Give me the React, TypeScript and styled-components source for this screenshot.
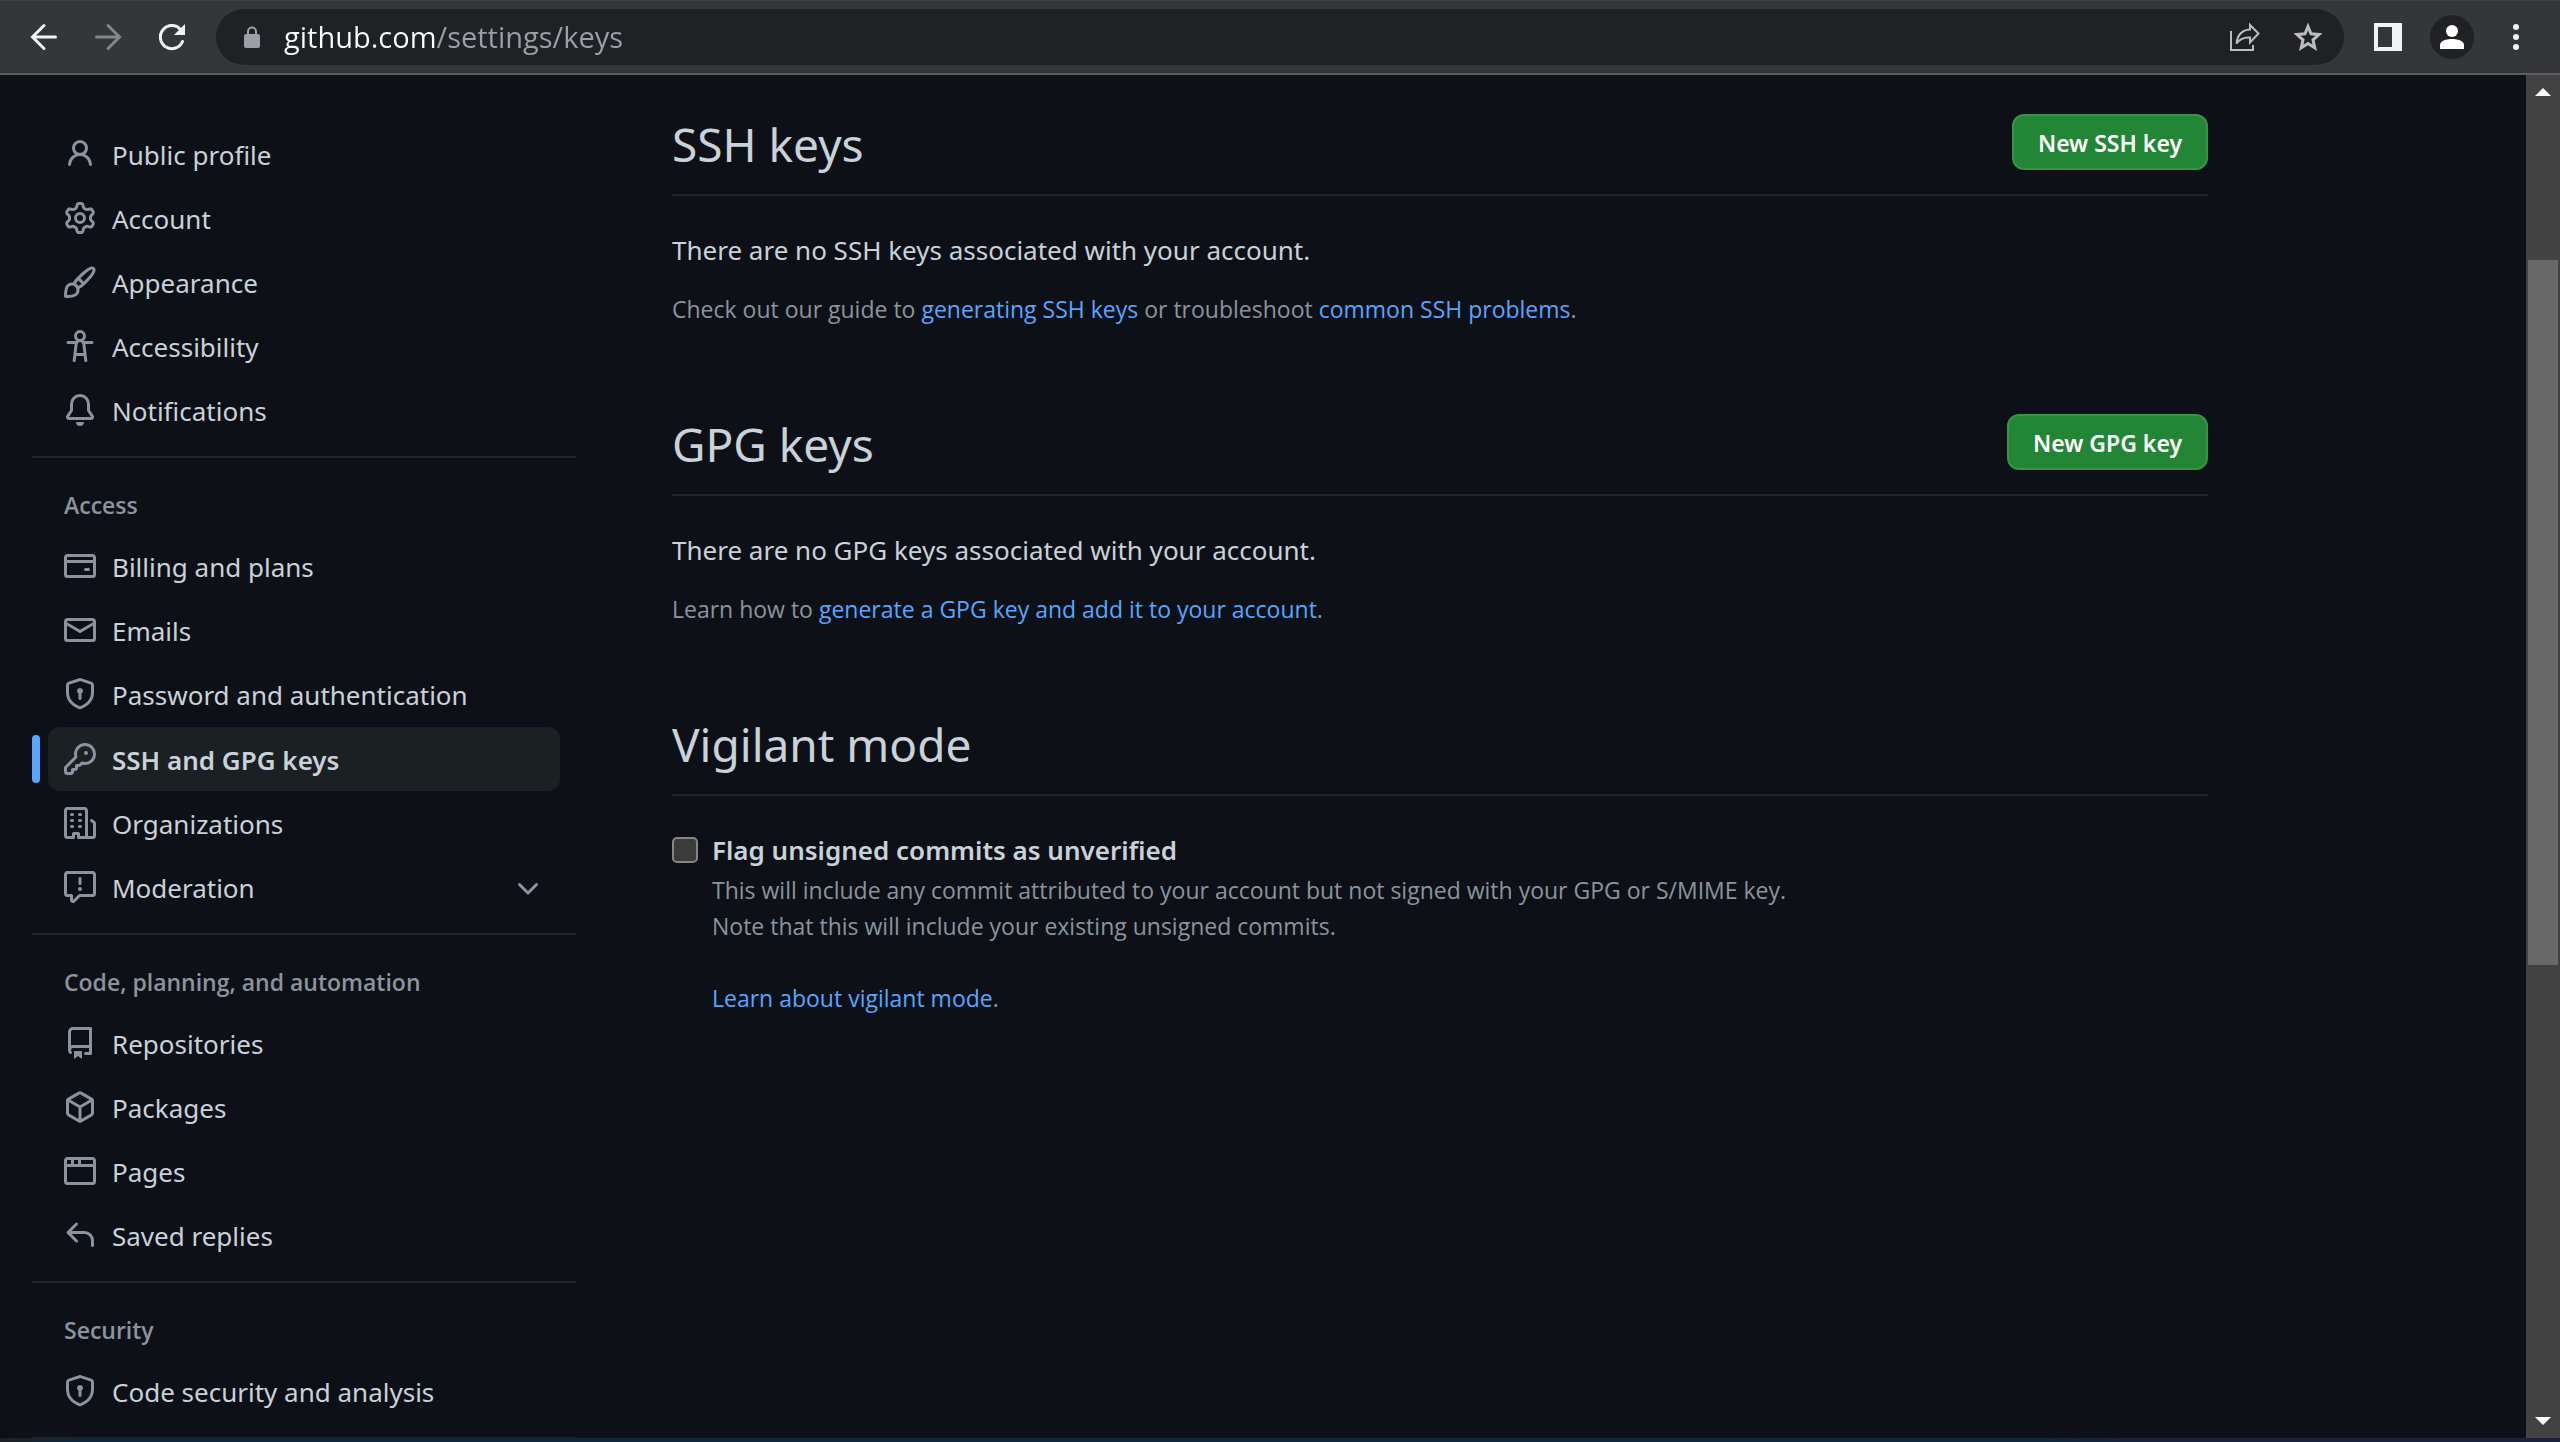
import React from "react";
import styled, { createGlobalStyle, css } from "styled-components";

const color = {
  canvas: "#0d1117",
  text: "#c9d1d9",
  muted: "#8b949e",
  accent: "#58a6ff",
  line: "#21262d",
  selected: "#1b2023",
  primary: "#238636",
  toolbar: "#35363a",
  omnibox: "#202124",
};

const font = {
  body: `"Noto Sans", "Open Sans", sans-serif`,
  caption: `"Open Sans", "Noto Sans", sans-serif`,
};

const GlobalStyle = createGlobalStyle`
  *, *::before, *::after { box-sizing: border-box; }
  html, body, #root { height: 100%; }
  body {
    margin: 0;
    overflow: hidden;
    background: ${color.canvas};
    color: ${color.text};
    font-family: ${font.body};
    font-size: 26px;
  }
  button, input { font-family: inherit; }
  svg { display: block; flex: none; }
`;

const Window = styled.div`
  display: flex;
  flex-direction: column;
  height: 100vh;
`;

/* ---------- browser toolbar ---------- */

const Toolbar = styled.header`
  display: flex;
  align-items: center;
  gap: 24px;
  padding: 8px 24px;
  background: ${color.toolbar};
  border-top: 1px solid #3f4044;
  border-bottom: 2px solid #5d5e62;
`;

const IconButton = styled.button`
  display: grid;
  place-items: center;
  width: 40px;
  height: 40px;
  padding: 0;
  border: 0;
  background: none;
  color: #f1f3f4;

  &:disabled {
    color: #85868a;
  }
`;

const Omnibox = styled.form`
  flex: 1;
  display: flex;
  align-items: center;
  gap: 20px;
  height: 56px;
  padding: 0 16px 0 24px;
  border-radius: 28px;
  background: ${color.omnibox};
`;

const hostWidth = 152;

const UrlInput = styled.input`
  flex: 1;
  min-width: 0;
  height: 40px;
  padding: 0 0 2px;
  border: 0;
  outline: 0;
  font-family: ${font.caption};
  font-size: 29px;
  color: transparent;
  background: linear-gradient(90deg, #ffffff ${hostWidth}px, #9aa0a6 ${hostWidth}px);
  -webkit-background-clip: text;
  background-clip: text;
`;

const OmniboxActions = styled.div`
  display: flex;
  gap: 24px;
`;

const BrowserActions = styled.div`
  display: flex;
  align-items: center;
  gap: 22px;
`;

const Avatar = styled(IconButton)`
  width: 44px;
  height: 44px;
  border-radius: 50%;
  background: ${color.omnibox};
`;

/* ---------- page ---------- */

const Viewport = styled.div`
  flex: 1;
  min-height: 0;
  display: flex;
`;

const Page = styled.div`
  flex: 1;
  min-width: 0;
  overflow: hidden;
  display: grid;
  grid-template-columns: 544px minmax(0, 1536px);
  column-gap: 96px;
  align-items: start;
  padding: 0 32px;
`;

const Sidebar = styled.nav`
  padding-top: 47px;
`;

const NavGroup = styled.section`
  & + & {
    margin-top: 14px;
    border-top: 2px solid ${color.line};
  }
`;

const NavHeading = styled.h2`
  margin: 0;
  padding: 29px 32px 11px;
  font-family: ${font.caption};
  font-size: 23px;
  line-height: 36px;
  font-weight: 600;
  color: ${color.muted};
`;

const NavList = styled.ul`
  margin: 0;
  padding: 0;
  list-style: none;
`;

const NavItem = styled.li<{ $active?: boolean }>`
  display: flex;
  align-items: center;
  gap: 8px;
  margin-top: ${(p) => (p.$active ? "1px" : "0")};
  padding-right: 16px;

  &::before {
    content: "";
    width: 8px;
    height: 48px;
    border-radius: 12px;
    background: ${(p) => (p.$active ? color.accent : "transparent")};
  }
`;

const navRow = css<{ $active?: boolean }>`
  flex: 1;
  display: flex;
  align-items: center;
  gap: 16px;
  height: 64px;
  padding: 0 16px;
  border: 0;
  border-radius: 12px;
  background: ${(p) => (p.$active ? color.selected : "transparent")};
  color: ${color.text};
  font-size: 26px;
  font-weight: ${(p) => (p.$active ? 600 : 400)};
  text-align: left;
  text-decoration: none;
`;

const NavLink = styled.a<{ $active?: boolean }>`
  ${navRow}
`;

const NavToggle = styled.button<{ $active?: boolean }>`
  ${navRow}
`;

const NavText = styled.span`
  flex: 1;
  padding-top: 2px;
`;

const NavIcon = styled.svg`
  width: 32px;
  height: 32px;
  fill: ${color.muted};
`;

const Main = styled.main`
  display: grid;
  gap: 80px;
  padding-top: 33px;
`;

const SectionHeader = styled.div`
  display: flex;
  align-items: center;
  justify-content: space-between;
  margin-bottom: 32px;
  padding-bottom: 14px;
  border-bottom: 2px solid ${color.line};
`;

const Title = styled.h1`
  margin: 0;
  font-size: 46px;
  line-height: 72px;
  font-weight: 400;
`;

const PrimaryButton = styled.button`
  height: 56px;
  margin-bottom: 4px;
  padding: 2px 24px 0;
  border: 2px solid #369447;
  border-radius: 12px;
  background: ${color.primary};
  color: #ffffff;
  font-size: 23px;
  font-weight: 600;
`;

const SectionBody = styled.div`
  min-height: 100px;
`;

const Lead = styled.p`
  margin: 0 0 19px;
  line-height: 44px;
`;

const Hint = styled.p`
  margin: 0;
  font-family: ${font.caption};
  font-size: 23px;
  line-height: 36px;
  color: ${color.muted};
`;

const Link = styled.a`
  color: ${color.accent};
  text-decoration: none;
`;

const Option = styled.div`
  display: grid;
  grid-template-columns: 26px 1fr;
  column-gap: 14px;
  align-items: center;
`;

const Checkbox = styled.input`
  appearance: none;
  width: 26px;
  height: 26px;
  margin: 0;
  border: 2px solid #858585;
  border-radius: 5px;
  background: #3b3b3b;
`;

const OptionLabel = styled.label`
  line-height: 44px;
  font-weight: 600;
`;

const OptionNote = styled(Hint)`
  grid-column: 2;

  & + & {
    margin-top: 36px;
  }
`;

/* ---------- scrollbar and window edge ---------- */

const Scrollbar = styled.div`
  display: flex;
  flex-direction: column;
  width: 34px;
  background: #424242;
`;

const ScrollArrow = styled.button`
  display: grid;
  place-items: center;
  width: 34px;
  height: 34px;
  padding: 0;
  border: 0;
  background: none;
`;

const Track = styled.div`
  flex: 1;
  display: grid;
  grid-template-rows: 151fr 705fr 439fr;
  padding: 0 2px;
`;

const Thumb = styled.div`
  grid-row: 2;
  background: #686868;
`;

const WindowEdge = styled.footer`
  height: 4px;
  background: linear-gradient(90deg, #1f2023, #10263a 3%, #10263a 80%, #1b213b 84%);
`;

/* ---------- data ---------- */

const icons = {
  person:
    "M10.561 8.073a6.005 6.005 0 0 1 3.432 5.142.75.75 0 1 1-1.498.07 4.5 4.5 0 0 0-8.99 0 .75.75 0 0 1-1.498-.07 6.004 6.004 0 0 1 3.431-5.142 3.999 3.999 0 1 1 5.123 0ZM10.5 5a2.5 2.5 0 1 0-5 0 2.5 2.5 0 0 0 5 0Z",
  gear:
    "M8 0a8.2 8.2 0 0 1 .701.031C9.444.095 9.99.645 10.16 1.29l.288 1.107c.018.066.079.158.212.224.231.114.454.243.668.386.123.082.233.09.299.071l1.103-.303c.644-.176 1.392.021 1.82.63.27.385.506.792.704 1.218.315.675.111 1.422-.364 1.891l-.814.806c-.049.048-.098.147-.088.294.016.257.016.515 0 .772-.01.147.038.246.088.294l.814.806c.475.469.679 1.216.364 1.891a7.977 7.977 0 0 1-.704 1.217c-.428.61-1.176.807-1.82.63l-1.102-.302c-.067-.019-.177-.011-.3.071a5.909 5.909 0 0 1-.668.386c-.133.066-.194.158-.211.224l-.29 1.106c-.168.646-.715 1.196-1.458 1.26a8.006 8.006 0 0 1-1.402 0c-.743-.064-1.289-.614-1.458-1.26l-.289-1.106c-.018-.066-.079-.158-.212-.224a5.738 5.738 0 0 1-.668-.386c-.123-.082-.233-.09-.299-.071l-1.103.303c-.644.176-1.392-.021-1.82-.63a8.12 8.12 0 0 1-.704-1.218c-.315-.675-.111-1.422.363-1.891l.815-.806c.05-.048.098-.147.088-.294a6.214 6.214 0 0 1 0-.772c.01-.147-.038-.246-.088-.294l-.815-.806C.635 6.045.431 5.298.746 4.623a7.92 7.92 0 0 1 .704-1.217c.428-.61 1.176-.807 1.82-.63l1.102.302c.067.019.177.011.3-.071.214-.143.437-.272.668-.386.133-.066.194-.158.211-.224l.29-1.106C6.009.645 6.556.095 7.299.03 7.53.01 7.764 0 8 0Zm-.571 1.525c-.036.003-.108.036-.137.146l-.289 1.105c-.147.561-.549.967-.998 1.189-.173.086-.34.183-.5.29-.417.278-.97.423-1.529.27l-1.103-.303c-.109-.03-.175.016-.195.045-.22.312-.412.644-.573.99-.014.031-.021.11.059.19l.815.806c.411.406.562.957.53 1.456a4.709 4.709 0 0 0 0 .582c.032.499-.119 1.05-.53 1.456l-.815.806c-.081.08-.073.159-.059.19.162.346.353.677.573.989.02.03.085.076.195.046l1.102-.303c.56-.153 1.113-.008 1.53.27.161.107.328.204.501.29.447.222.85.629.997 1.189l.289 1.105c.029.109.101.143.137.146a6.6 6.6 0 0 0 1.142 0c.036-.003.108-.036.137-.146l.289-1.105c.147-.561.549-.967.998-1.189.173-.086.34-.183.5-.29.417-.278.97-.423 1.529-.27l1.103.303c.109.029.175-.016.195-.045.22-.313.411-.644.573-.99.014-.031.021-.11-.059-.19l-.815-.806c-.411-.406-.562-.957-.53-1.456a4.709 4.709 0 0 0 0-.582c-.032-.499.119-1.05.53-1.456l.815-.806c.081-.08.073-.159.059-.19a6.464 6.464 0 0 0-.573-.989c-.02-.03-.085-.076-.195-.046l-1.102.303c-.56.153-1.113.008-1.53-.27a4.44 4.44 0 0 0-.501-.29c-.447-.222-.85-.629-.997-1.189l-.289-1.105c-.029-.11-.101-.143-.137-.146a6.6 6.6 0 0 0-1.142 0ZM11 8a3 3 0 1 1-6 0 3 3 0 0 1 6 0ZM9.5 8a1.5 1.5 0 1 0-3.001.001A1.5 1.5 0 0 0 9.5 8Z",
  paintbrush:
    "M11.134 1.535c.7-.509 1.416-.942 2.076-1.155.649-.21 1.463-.267 2.069.34.603.601.568 1.411.368 2.07-.202.668-.624 1.39-1.125 2.096-1.011 1.424-2.496 2.987-3.775 4.249-1.098 1.084-2.132 1.839-3.04 2.3a3.744 3.744 0 0 1-1.055 3.217c-.431.431-1.065.691-1.657.861-.614.177-1.294.287-1.914.357A21.151 21.151 0 0 1 .797 16H.743l.007-.75H.749L.742 16a.75.75 0 0 1-.743-.742l.743-.008-.742.007v-.054a21.25 21.25 0 0 1 .13-2.284c.067-.647.187-1.287.358-1.914.17-.591.43-1.226.86-1.657a3.746 3.746 0 0 1 3.227-1.054c.466-.893 1.225-1.907 2.314-2.982 1.271-1.255 2.833-2.75 4.245-3.777ZM1.62 13.089c-.051.464-.086.929-.104 1.395.466-.018.932-.053 1.396-.104a10.511 10.511 0 0 0 1.668-.309c.526-.151.856-.325 1.011-.48a2.25 2.25 0 1 0-3.182-3.182c-.155.155-.329.485-.48 1.01a10.515 10.515 0 0 0-.309 1.67Zm10.396-10.34c-1.224.89-2.605 2.189-3.822 3.384l1.718 1.718c1.21-1.205 2.51-2.597 3.387-3.833.47-.662.78-1.227.912-1.662.134-.444.032-.551.009-.575h-.001V1.78c-.014-.014-.113-.113-.548.027-.432.14-.995.462-1.655.942Zm-4.832 7.266-.001.001a9.859 9.859 0 0 0 1.63-1.142L7.155 7.216a9.7 9.7 0 0 0-1.161 1.607c.482.302.889.71 1.19 1.192Z",
  accessibility:
    "M9.923 5.302c.063.063.122.129.178.198H14A.75.75 0 0 1 14 7h-3.3l.578 5.163.362 2.997a.75.75 0 0 1-1.49.18L9.868 13H6.132l-.282 2.34a.75.75 0 0 1-1.49-.18l.362-2.997L5.3 7H2a.75.75 0 0 1 0-1.5h3.9a2.54 2.54 0 0 1 .176-.198 3 3 0 1 1 3.847 0ZM9.2 7.073h-.001a1.206 1.206 0 0 0-2.398 0L6.305 11.5h3.39ZM9.5 3a1.5 1.5 0 1 0-3.001.001A1.5 1.5 0 0 0 9.5 3Z",
  bell:
    "M8 16a2 2 0 0 0 1.985-1.75c.017-.137-.097-.25-.235-.25h-3.5c-.138 0-.252.113-.235.25A2 2 0 0 0 8 16ZM3 5a5 5 0 0 1 10 0v2.947c0 .05.015.098.042.139l1.703 2.555A1.519 1.519 0 0 1 13.482 13H2.518a1.516 1.516 0 0 1-1.263-2.36l1.703-2.554A.255.255 0 0 0 3 7.947Zm5-3.5A3.5 3.5 0 0 0 4.5 5v2.947c0 .346-.102.683-.294.97l-1.703 2.556a.017.017 0 0 0-.003.01l.001.006c0 .002.002.004.004.006l.006.004.007.001h10.964l.007-.001.006-.004.004-.006.001-.007a.017.017 0 0 0-.003-.01l-1.703-2.554a1.745 1.745 0 0 1-.294-.97V5A3.5 3.5 0 0 0 8 1.5Z",
  creditCard:
    "M10.75 9a.75.75 0 0 0 0 1.5h1.5a.75.75 0 0 0 0-1.5h-1.5Z M0 3.75C0 2.784.784 2 1.75 2h12.5c.966 0 1.75.784 1.75 1.75v8.5A1.75 1.75 0 0 1 14.25 14H1.75A1.75 1.75 0 0 1 0 12.25ZM14.5 6.5h-13v5.75c0 .138.112.25.25.25h12.5a.25.25 0 0 0 .25-.25Zm0-2.75a.25.25 0 0 0-.25-.25H1.75a.25.25 0 0 0-.25.25V5h13Z",
  mail:
    "M1.75 2h12.5c.966 0 1.75.784 1.75 1.75v8.5A1.75 1.75 0 0 1 14.25 14H1.75A1.75 1.75 0 0 1 0 12.25v-8.5C0 2.784.784 2 1.75 2ZM1.5 12.251c0 .138.112.25.25.25h12.5a.25.25 0 0 0 .25-.25V5.809L8.38 9.397a.75.75 0 0 1-.76 0L1.5 5.809v6.442Zm13-8.181v-.32a.25.25 0 0 0-.25-.25H1.75a.25.25 0 0 0-.25.25v.32L8 7.88Z",
  shieldLock:
    "m8.533.133 5.25 1.68A1.75 1.75 0 0 1 15 3.48V7c0 1.566-.32 3.182-1.303 4.682-.983 1.498-2.585 2.813-5.032 3.855a1.697 1.697 0 0 1-1.33 0c-2.447-1.042-4.049-2.357-5.032-3.855C1.32 10.182 1 8.566 1 7V3.48a1.75 1.75 0 0 1 1.217-1.667l5.25-1.68a1.748 1.748 0 0 1 1.066 0Zm-.61 1.429.001.001-5.25 1.68a.251.251 0 0 0-.174.237V7c0 1.36.275 2.666 1.057 3.859.784 1.194 2.121 2.342 4.366 3.298a.196.196 0 0 0 .154 0c2.245-.957 3.582-2.103 4.366-3.297C13.225 9.666 13.5 8.358 13.5 7V3.48a.25.25 0 0 0-.174-.238l-5.25-1.68a.25.25 0 0 0-.153 0ZM9.5 6.5c0 .536-.286 1.032-.75 1.3v2.45a.75.75 0 0 1-1.5 0V7.8A1.5 1.5 0 1 1 9.5 6.5Z",
  key:
    "M10.5 0a5.499 5.499 0 1 1-1.288 10.848l-.932.932a.749.749 0 0 1-.53.22H7v.75a.749.749 0 0 1-.22.53l-.5.5a.749.749 0 0 1-.53.22H5v.75a.749.749 0 0 1-.22.53l-.5.5a.749.749 0 0 1-.53.22h-2A1.75 1.75 0 0 1 0 14.25v-2c0-.199.079-.389.22-.53l4.932-4.932A5.5 5.5 0 0 1 10.5 0Zm-4 5.5c-.001.431.069.86.205 1.269a.75.75 0 0 1-.181.768L1.5 12.56v1.69c0 .138.112.25.25.25h1.69l.06-.06v-1.19a.75.75 0 0 1 .75-.75h1.19l.06-.06v-1.19a.75.75 0 0 1 .75-.75h1.19l1.023-1.025a.75.75 0 0 1 .768-.18A4 4 0 1 0 6.5 5.5ZM11 6a1 1 0 1 1 0-2 1 1 0 0 1 0 2Z",
  organization:
    "M1.75 16A1.75 1.75 0 0 1 0 14.25V1.75C0 .784.784 0 1.75 0h8.5C11.216 0 12 .784 12 1.75v12.5c0 .085-.006.168-.018.25h2.268a.25.25 0 0 0 .25-.25V8.285a.25.25 0 0 0-.111-.208l-1.055-.703a.749.749 0 1 1 .832-1.248l1.055.703c.487.325.779.871.779 1.456v5.965A1.75 1.75 0 0 1 14.25 16h-3.5a.766.766 0 0 1-.197-.026c-.099.017-.2.026-.303.026h-3a.75.75 0 0 1-.75-.75V14h-1v1.25a.75.75 0 0 1-.75.75Zm-.25-1.75c0 .138.112.25.25.25H4v-1.25a.75.75 0 0 1 .75-.75h2.5a.75.75 0 0 1 .75.75v1.25h2.25a.25.25 0 0 0 .25-.25V1.75a.25.25 0 0 0-.25-.25h-8.5a.25.25 0 0 0-.25.25ZM3.75 6h.5a.75.75 0 0 1 0 1.5h-.5a.75.75 0 0 1 0-1.5ZM3 3.75A.75.75 0 0 1 3.75 3h.5a.75.75 0 0 1 0 1.5h-.5A.75.75 0 0 1 3 3.75Zm4 3A.75.75 0 0 1 7.75 6h.5a.75.75 0 0 1 0 1.5h-.5A.75.75 0 0 1 7 6.75ZM7.75 3h.5a.75.75 0 0 1 0 1.5h-.5a.75.75 0 0 1 0-1.5ZM3 9.75A.75.75 0 0 1 3.75 9h.5a.75.75 0 0 1 0 1.5h-.5A.75.75 0 0 1 3 9.75ZM7.75 9h.5a.75.75 0 0 1 0 1.5h-.5a.75.75 0 0 1 0-1.5Z",
  report:
    "M0 1.75C0 .784.784 0 1.75 0h12.5C15.216 0 16 .784 16 1.75v9.5A1.75 1.75 0 0 1 14.25 13H8.06l-2.573 2.573A1.458 1.458 0 0 1 3 14.543V13H1.75A1.75 1.75 0 0 1 0 11.25Zm1.75-.25a.25.25 0 0 0-.25.25v9.5c0 .138.112.25.25.25h2a.75.75 0 0 1 .75.75v2.19l2.72-2.72a.749.749 0 0 1 .53-.22h6.5a.25.25 0 0 0 .25-.25v-9.5a.25.25 0 0 0-.25-.25Zm7 2.25v2.5a.75.75 0 0 1-1.5 0v-2.5a.75.75 0 0 1 1.5 0ZM9 9a1 1 0 1 1-2 0 1 1 0 0 1 2 0Z",
  repo:
    "M2 2.5A2.5 2.5 0 0 1 4.5 0h8.75a.75.75 0 0 1 .75.75v12.5a.75.75 0 0 1-.75.75h-2.5a.75.75 0 0 1 0-1.5h1.75v-2h-8a1 1 0 0 0-.714 1.7.75.75 0 1 1-1.072 1.05A2.495 2.495 0 0 1 2 11.5Zm10.5-1h-8a1 1 0 0 0-1 1v6.708A2.486 2.486 0 0 1 4.5 9h8ZM5 12.25a.25.25 0 0 1 .25-.25h3.5a.25.25 0 0 1 .25.25v3.25a.25.25 0 0 1-.4.2l-1.45-1.087a.249.249 0 0 0-.3 0L5.4 15.7a.25.25 0 0 1-.4-.2Z",
  package:
    "m8.878.392 5.25 3.045c.54.314.872.89.872 1.514v6.098a1.75 1.75 0 0 1-.872 1.514l-5.25 3.045a1.75 1.75 0 0 1-1.756 0l-5.25-3.045A1.75 1.75 0 0 1 1 11.049V4.951c0-.624.332-1.201.872-1.514L7.122.392a1.75 1.75 0 0 1 1.756 0ZM7.875 1.69l-4.63 2.685L8 7.133l4.755-2.758-4.63-2.685a.248.248 0 0 0-.25 0ZM2.5 5.677v5.372c0 .09.047.171.125.216l4.625 2.683V8.432Zm6.25 8.271 4.625-2.683a.25.25 0 0 0 .125-.216V5.677L8.75 8.432Z",
  browser:
    "M0 2.75C0 1.784.784 1 1.75 1h12.5c.966 0 1.75.784 1.75 1.75v10.5A1.75 1.75 0 0 1 14.25 15H1.75A1.75 1.75 0 0 1 0 13.25ZM14.5 6h-13v7.25c0 .138.112.25.25.25h12.5a.25.25 0 0 0 .25-.25Zm-6-3.5v2h6V2.75a.25.25 0 0 0-.25-.25ZM5 2.5v2h2v-2Zm-3.25 0a.25.25 0 0 0-.25.25V4.5h2v-2Z",
  reply:
    "M6.78 1.97a.75.75 0 0 1 0 1.06L3.81 6h6.44A4.75 4.75 0 0 1 15 10.75v2.5a.75.75 0 0 1-1.5 0v-2.5a3.25 3.25 0 0 0-3.25-3.25H3.81l2.97 2.97a.749.749 0 0 1-.326 1.275.749.749 0 0 1-.734-.215L1.47 7.28a.75.75 0 0 1 0-1.06l4.25-4.25a.75.75 0 0 1 1.06 0Z",
  chevronDown:
    "M12.78 6.22a.75.75 0 010 1.06l-4.25 4.25a.75.75 0 01-1.06 0L3.22 7.28a.75.75 0 011.06-1.06L8 9.94l3.72-3.72a.75.75 0 011.06 0z",
};

type IconName = keyof typeof icons;

interface Item {
  label: string;
  icon: IconName;
  active?: boolean;
  expandable?: boolean;
}

interface Group {
  heading?: string;
  items: Item[];
}

const groups: Group[] = [
  {
    items: [
      { label: "Public profile", icon: "person" },
      { label: "Account", icon: "gear" },
      { label: "Appearance", icon: "paintbrush" },
      { label: "Accessibility", icon: "accessibility" },
      { label: "Notifications", icon: "bell" },
    ],
  },
  {
    heading: "Access",
    items: [
      { label: "Billing and plans", icon: "creditCard" },
      { label: "Emails", icon: "mail" },
      { label: "Password and authentication", icon: "shieldLock" },
      { label: "SSH and GPG keys", icon: "key", active: true },
      { label: "Organizations", icon: "organization" },
      { label: "Moderation", icon: "report", expandable: true },
    ],
  },
  {
    heading: "Code, planning, and automation",
    items: [
      { label: "Repositories", icon: "repo" },
      { label: "Packages", icon: "package" },
      { label: "Pages", icon: "browser" },
      { label: "Saved replies", icon: "reply" },
    ],
  },
  {
    heading: "Security",
    items: [{ label: "Code security and analysis", icon: "shieldLock" }],
  },
  { items: [] },
];

function Icon({ name }: { name: IconName }) {
  return (
    <NavIcon viewBox="0 0 16 16" aria-hidden="true">
      <path d={icons[name]} />
    </NavIcon>
  );
}

function NavEntry({ item }: { item: Item }) {
  if (item.expandable) {
    return (
      <NavItem>
        <NavToggle type="button" aria-expanded="false">
          <Icon name={item.icon} />
          <NavText>{item.label}</NavText>
          <Icon name="chevronDown" />
        </NavToggle>
      </NavItem>
    );
  }
  return (
    <NavItem $active={item.active}>
      <NavLink href="#" $active={item.active} aria-current={item.active ? "page" : undefined}>
        <Icon name={item.icon} />
        <NavText>{item.label}</NavText>
      </NavLink>
    </NavItem>
  );
}

function BrowserToolbar() {
  return (
    <Toolbar>
      <IconButton type="button" aria-label="Back">
        <svg width="40" height="40" viewBox="0 0 40 40" fill="none" stroke="currentColor" strokeWidth="3" strokeLinecap="round">
          <path d="M31.5 20H9M20 8.5 8.5 20 20 31.5" />
        </svg>
      </IconButton>
      <IconButton type="button" aria-label="Forward" disabled>
        <svg width="40" height="40" viewBox="0 0 40 40" fill="none" stroke="currentColor" strokeWidth="3" strokeLinecap="round">
          <path d="M8.500 20H31M20 8.500 31.500 20 20 31.500" />
        </svg>
      </IconButton>
      <IconButton type="button" aria-label="Reload">
        <svg width="40" height="40" viewBox="0 0 40 40" fill="none" stroke="currentColor" strokeWidth="3" strokeLinecap="round">
          <path d="M30.500 24.500A11.500 11.500 0 1 1 28.500 12.500" />
          <path d="M33 7V18H22Z" fill="currentColor" stroke="none" />
        </svg>
      </IconButton>
      <Omnibox>
        <svg width="24" height="24" viewBox="-1 0 24 24" aria-hidden="true">
          <rect x="3" y="9" width="16" height="14" rx="2" fill="#9aa0a6" />
          <path d="M7 9V6.500a4 4 0 0 1 8 0V9" fill="none" stroke="#9aa0a6" strokeWidth="2" />
        </svg>
        <UrlInput type="text" aria-label="Address" defaultValue="github.com/settings/keys" spellCheck={false} />
        <OmniboxActions>
          <IconButton type="button" aria-label="Share this page">
            <svg width="40" height="40" viewBox="0 0 40 40" fill="none" stroke="#bdbdbd" strokeWidth="2">
              <path d="M7 14V33H29V28" />
              <path d="M12.500 26.500C13.500 17 18 13 26 12.500V8L34.500 16.500 26 25.500V20.500C19.500 20 15.500 22 12.500 26.500Z" />
            </svg>
          </IconButton>
          <IconButton type="button" aria-label="Bookmark this page">
            <svg width="40" height="40" viewBox="0 0 40 40" fill="none" stroke="#bdbdbd" strokeWidth="3">
              <path d="M20 9.500 23 16.800 31 17.500 25 22.800 26.800 30.800 20 26.500 13.200 30.800 15 22.800 9 17.500 17 16.800Z" />
            </svg>
          </IconButton>
        </OmniboxActions>
      </Omnibox>
      <BrowserActions>
        <IconButton type="button" aria-label="Side panel">
          <svg width="28" height="28" viewBox="0 0 28 28" fill="currentColor" fillRule="evenodd">
            <path d="M0 0H28V28H0ZM4 4V24H18V4Z" />
          </svg>
        </IconButton>
        <Avatar type="button" aria-label="Profile">
          <svg width="24" height="24" viewBox="0 0 24 24" fill="#ffffff">
            <circle cx="12" cy="6" r="6" />
            <path d="M0 24V20C0 16 6 14 12 14S24 16 24 20V24Z" />
          </svg>
        </Avatar>
        <IconButton type="button" aria-label="Browser menu">
          <svg width="6" height="26" viewBox="0 0 6 26" fill="currentColor">
            <circle cx="3" cy="3" r="3" />
            <circle cx="3" cy="13" r="3" />
            <circle cx="3" cy="23" r="3" />
          </svg>
        </IconButton>
      </BrowserActions>
    </Toolbar>
  );
}

export default function App() {
  return (
    <Window>
      <GlobalStyle />
      <BrowserToolbar />
      <Viewport>
        <Page>
          <Sidebar aria-label="Settings">
            {groups.map((group, index) => (
              <NavGroup key={group.heading ?? index}>
                {group.heading && <NavHeading>{group.heading}</NavHeading>}
                <NavList>
                  {group.items.map((item) => (
                    <NavEntry key={item.label} item={item} />
                  ))}
                </NavList>
              </NavGroup>
            ))}
          </Sidebar>
          <Main>
            <section>
              <SectionHeader>
                <Title>SSH keys</Title>
                <PrimaryButton type="button">New SSH key</PrimaryButton>
              </SectionHeader>
              <SectionBody>
                <Lead>There are no SSH keys associated with your account.</Lead>
                <Hint>
                  Check out our guide to <Link href="#">generating SSH keys</Link> or troubleshoot{" "}
                  <Link href="#">common SSH problems</Link>.
                </Hint>
              </SectionBody>
            </section>
            <section>
              <SectionHeader>
                <Title>GPG keys</Title>
                <PrimaryButton type="button">New GPG key</PrimaryButton>
              </SectionHeader>
              <SectionBody>
                <Lead>There are no GPG keys associated with your account.</Lead>
                <Hint>
                  Learn how to <Link href="#">generate a GPG key and add it to your account</Link>.
                </Hint>
              </SectionBody>
            </section>
            <section>
              <SectionHeader>
                <Title>Vigilant mode</Title>
              </SectionHeader>
              <Option>
                <Checkbox type="checkbox" id="vigilant" />
                <OptionLabel htmlFor="vigilant">Flag unsigned commits as unverified</OptionLabel>
                <OptionNote>
                  This will include any commit attributed to your account but not signed with your GPG or S/MIME key.
                  <br />
                  Note that this will include your existing unsigned commits.
                </OptionNote>
                <OptionNote>
                  <Link href="#">Learn about vigilant mode</Link>.
                </OptionNote>
              </Option>
            </section>
          </Main>
        </Page>
        <Scrollbar>
          <ScrollArrow type="button" aria-label="Scroll up">
            <svg width="16" height="8" viewBox="0 0 16 8" fill="#ffffff">
              <path d="M0 8 8 0 16 8Z" />
            </svg>
          </ScrollArrow>
          <Track>
            <Thumb />
          </Track>
          <ScrollArrow type="button" aria-label="Scroll down">
            <svg width="16" height="8" viewBox="0 0 16 8" fill="#ffffff">
              <path d="M0 0 8 8 16 0Z" />
            </svg>
          </ScrollArrow>
        </Scrollbar>
      </Viewport>
      <WindowEdge />
    </Window>
  );
}
